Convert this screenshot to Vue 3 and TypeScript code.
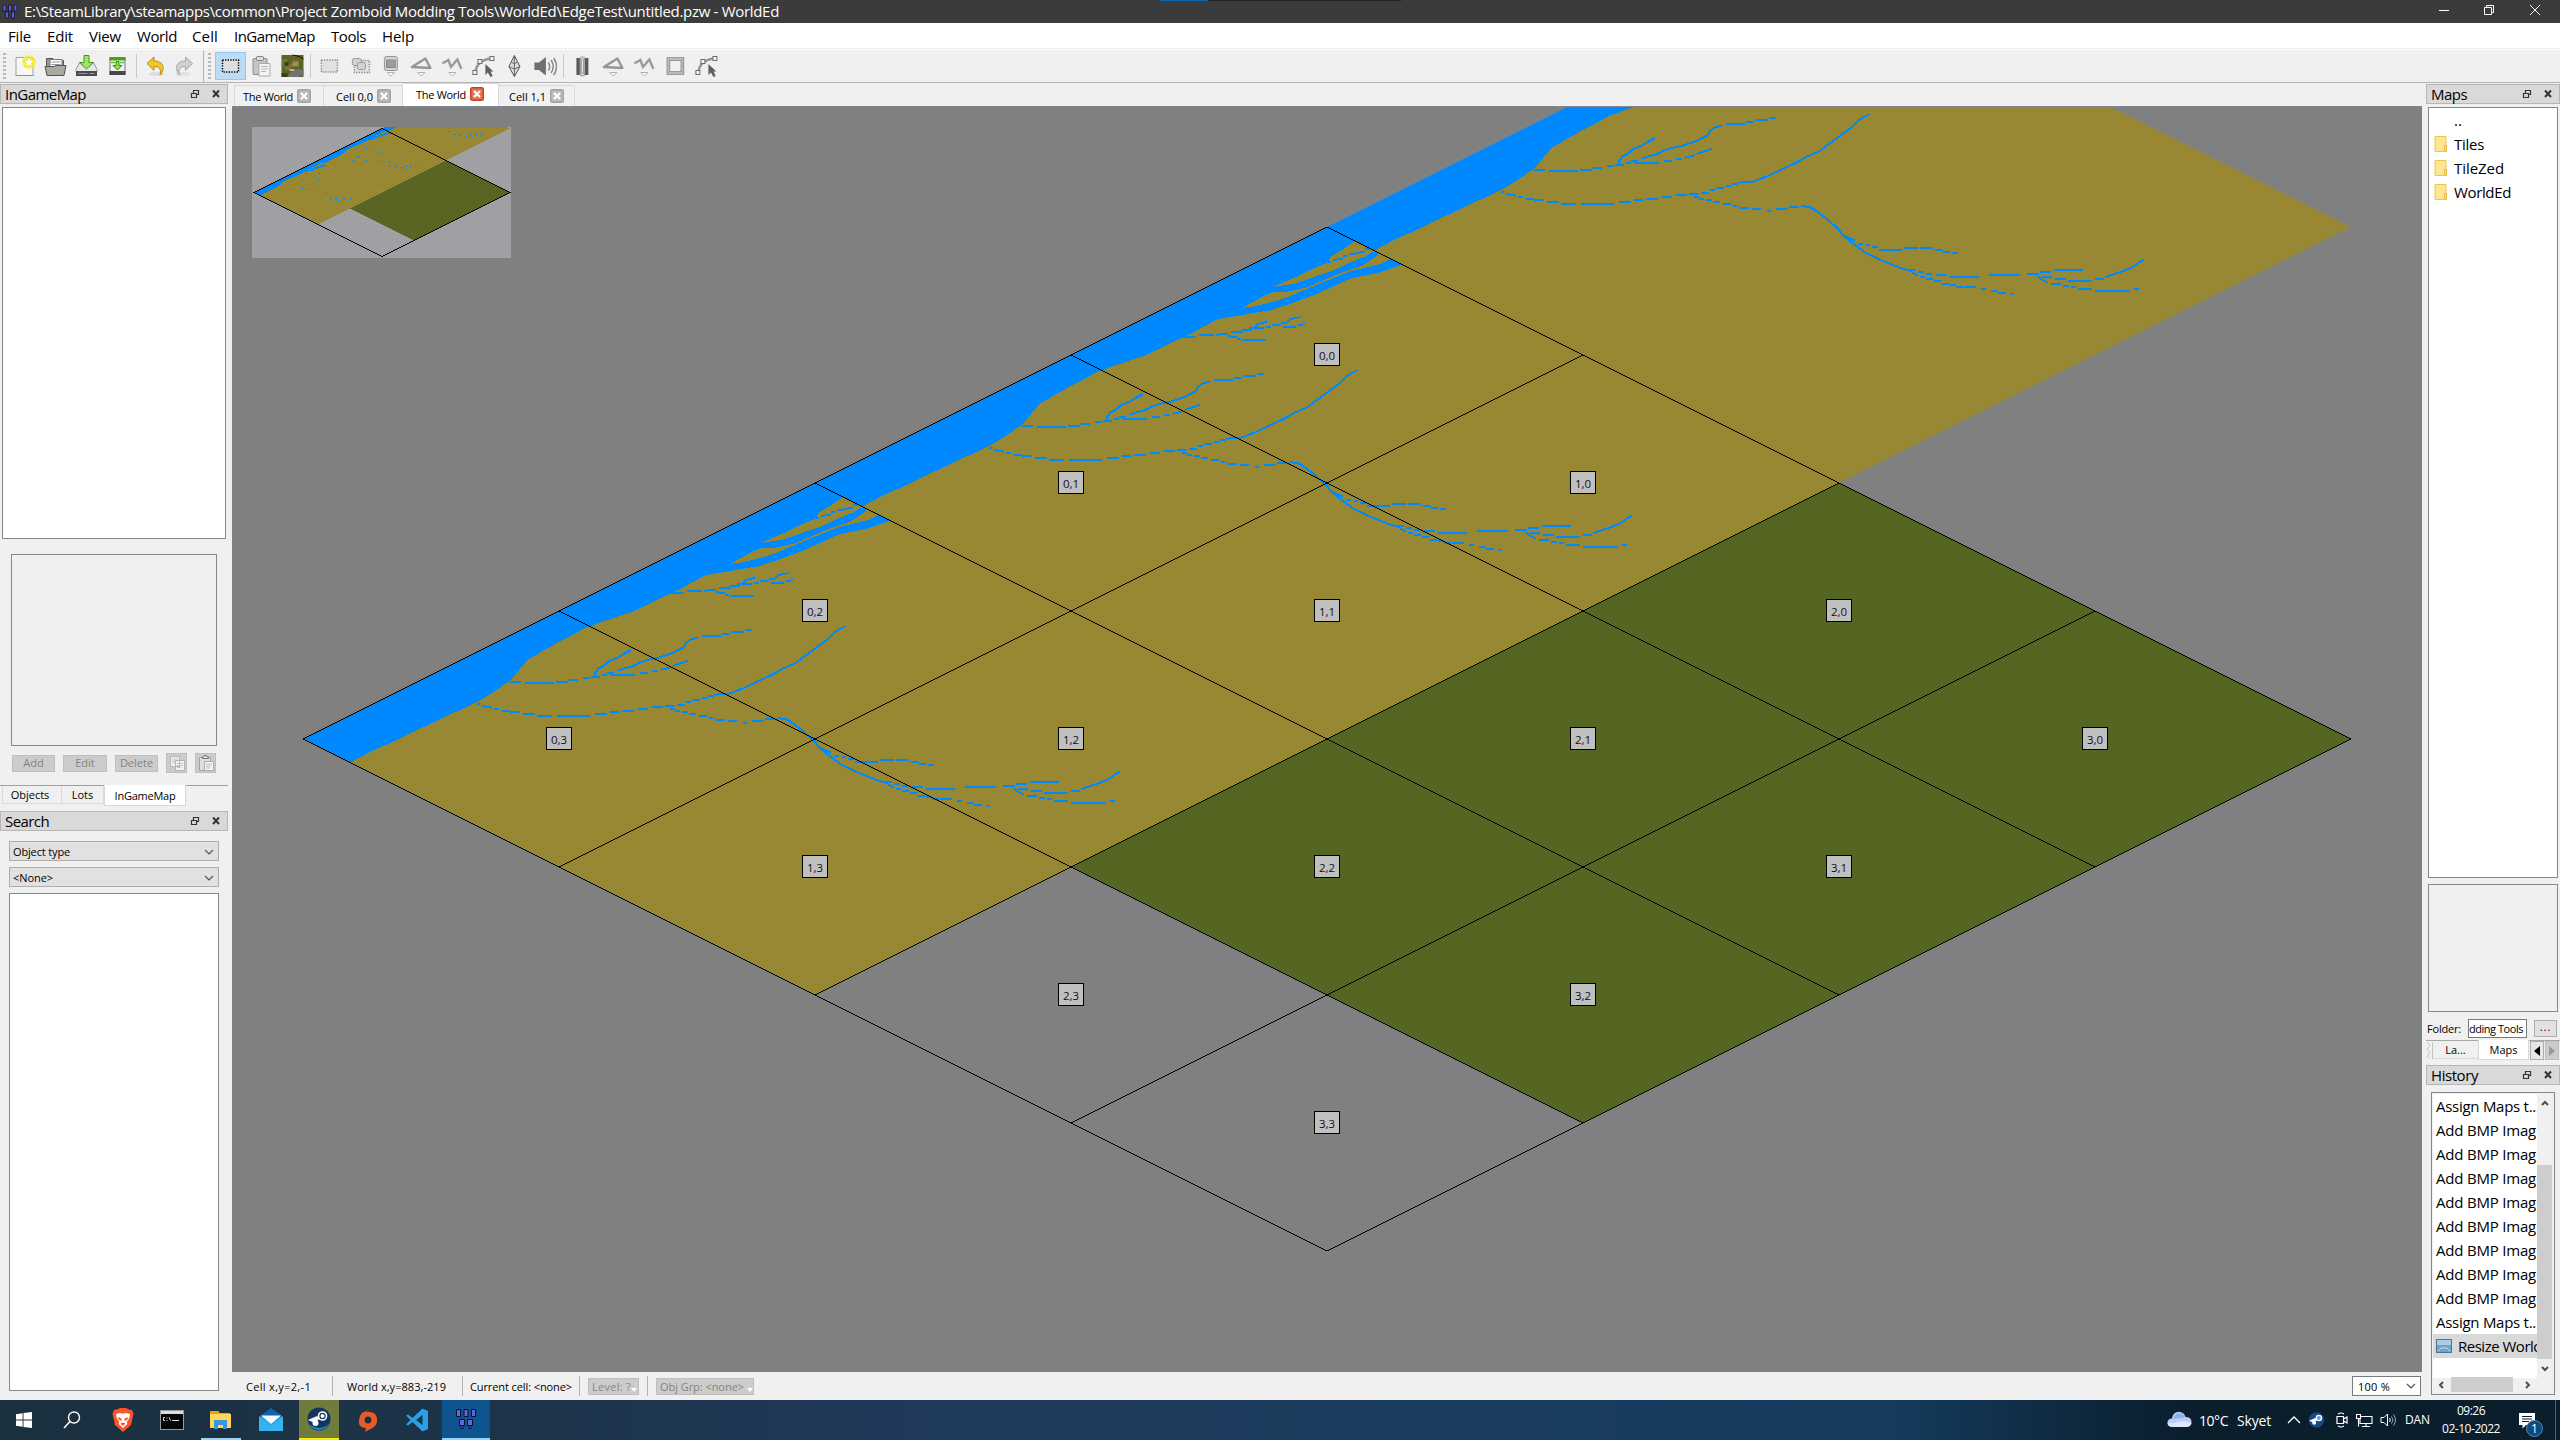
<script setup lang="ts">
import { computed } from 'vue'

/* Spreads a run of text over a known pixel width. */
const vFit = {
  mounted(el: HTMLElement, binding: { value: number }) {
    el.style.display = 'inline-block'
    el.style.whiteSpace = 'pre'
    const natural = el.getBoundingClientRect().width
    const n = (el.textContent || '').length
    if (n > 0) el.style.letterSpacing = (binding.value - natural) / n + 'px'
  },
}

const menus: [string, number, number][] = [
  ['File', 8, 23], ['Edit', 47, 26], ['View', 89, 32], ['World', 137, 40],
  ['Cell', 192, 26], ['InGameMap', 234, 81], ['Tools', 331, 35], ['Help', 382, 32],
]
const menuItems = computed(() =>
  menus.map(([text, x, w], i) => ({
    text, w, gap: i ? x - menus[i - 1][1] - menus[i - 1][2] : x,
  })),
)

const triangle = '<path d="M2.500 13L16 4.500L21 14Z" fill="none" stroke="#959595" stroke-width="2.400" stroke-linejoin="round"/><path d="M8.500 18.500h7l-3.500 3.500z" fill="#fff" stroke="#b0b0b0"/>'
const zigzag = '<path d="M2 9.500L8 6L10.500 13L17 5.500L21 15" fill="none" stroke="#999" stroke-width="2.300"/><path d="M8.500 18.500h7l-3.500 3.500z" fill="#fff" stroke="#b0b0b0"/>'
const nodes = '<path d="M4 17.500Q6 6 20 4.500" fill="none" stroke="#959595" stroke-width="2.400"/><g fill="#f4f4f4" stroke="#6c6c6c"><rect x="1.500" y="16.500" width="4" height="4"/><rect x="6.500" y="5.500" width="4" height="4"/><rect x="18.500" y="2.500" width="4" height="4"/></g><path d="M14 10V21L16.500 18.500L19 23L21.300 22L19.200 17.500H22Z" fill="#606060"/>'

const icons: Record<string, string> = {
  create: '<path d="M3.500 3.500h17v18h-17z" fill="#f7f7f7" stroke="#a2a29e" stroke-linejoin="round"/><path d="M3 21.500h18" stroke="#8f8f8b"/><circle cx="16.500" cy="8" r="7" fill="#f6ee3c" opacity=".75"/><path d="M16.500 2.500l1.700 3.500 3.800.5-2.800 2.600.7 3.800-3.400-1.900-3.400 1.900.7-3.800L11 6.500l3.800-.5z" fill="#fff" stroke="#ede400"/>',
  open: '<path d="M3 20V4.500h6.500l1.500 2h9V20z" fill="#9a9a92" stroke="#56564f"/><path d="M6.500 5.500h12v9h-12z" fill="#fff" stroke="#777"/><path d="M8 8h9M8 10.500h9" stroke="#999"/><path d="M1.500 12.500h9l2-1h10l-2 10h-17z" fill="#a9a9a0" stroke="#56564f"/>',
  save: '<path d="M1.500 15.500L5 8.500h14l3.500 7v2h-21z" fill="#e6e6e6" stroke="#999"/><path d="M1.500 17h21v5h-21z" fill="#4a4a50"/><path d="M4 19.500h9M15 19.500h5" stroke="#999"/><path d="M9.500 1.500h5v7h4.500L12 15 5 8.500h4.500z" fill="#9be860" stroke="#44960f"/>',
  saveAll: '<path d="M4.500 3.500h15v17h-15z" fill="#f2f2f2" stroke="#7b7b7b"/><path d="M4 3h16v3.500H4z" fill="#4ba01c"/><path d="M4 17h16v4H4z" fill="#46464a"/><path d="M5.500 8.500h4M14.500 8.500h4" stroke="#73b34e" stroke-width="1.500"/><path d="M10.500 7.500h3v4h3L12 16 7.500 11.500h3z" fill="#8be04b" stroke="#3d8c0c"/>',
  undo: '<ellipse cx="13" cy="20" rx="8" ry="2" fill="#ddd"/><path d="M3.500 9.500L10.500 3v4c9 0 12 7 6 14 1.500-6-.5-8.500-6-8.500v3.800z" fill="#f0c62a" stroke="#b58c0b"/>',
  redo: '<g transform="translate(-2.500 0)"><ellipse cx="11" cy="20" rx="8" ry="2" fill="#e2e2e2"/><path d="M20.500 9.500L13.500 3v4c-9 0-12 7-6 14-1.500-6 .5-8.500 6-8.500v3.800z" fill="#cfcfcf" stroke="#a6a6a6"/></g>',
  select: '<rect x="4" y="5.500" width="16" height="12.500" fill="#dedfdc"/><rect x="4" y="6" width="16" height="12" fill="none" stroke="#000" stroke-width="1.500" stroke-dasharray="1.300 1.300"/>',
  paste: '<rect x="3.500" y="4.500" width="14" height="16" rx="1" fill="#c4c4c4" stroke="#8f8f8f"/><rect x="7" y="2.500" width="7" height="4" rx="1" fill="#dedede" stroke="#808080"/><path d="M9.500 9.500h11v12.500h-11z" fill="#f5f5f5" stroke="#aaa"/><path d="M11.500 12.500h7M11.500 15h7M11.500 17.500h5" stroke="#b5b5b5"/>',
  terrain: '<rect x="1" y="1" width="22" height="22" fill="#5a6423"/><path d="M2 5h5v5h5V6h6v7h-7v3H4v-4H1z" fill="#7d7036"/><path d="M12 8h6v4h-6z" fill="#a08e58"/><path d="M7 23l3-5 7-3 6 1v5l-6 2z" fill="#707370"/><path d="M12 1q8 1 11 4" stroke="#111" fill="none"/><path d="M1 19h6v4H1zM4 8h4v4H4z" fill="#3a3f1a"/><path d="M9 15h5v2H9z" fill="#c3af7a"/>',
  area: '<rect x="4" y="6" width="16" height="12" fill="#e2e2e2" stroke="#888" stroke-width="1.500" stroke-dasharray="1.300 1.300"/>',
  areas: '<rect x="6" y="6.500" width="15" height="12" fill="#e2e2e2" stroke="#888" stroke-width="1.500" stroke-dasharray="1.300 1.300"/><rect x="4" y="4.500" width="9" height="7" rx="2" fill="#d2d2d2" stroke="#999"/><rect x="9" y="8.500" width="8" height="7" rx="2" fill="#d2d2d2" stroke="#999"/>',
  object: '<rect x="5" y="2.500" width="13" height="14" rx="2" fill="#d4d4d4" stroke="#959595"/><rect x="7" y="6" width="9" height="7.500" fill="#9c9c9c" stroke="#8a8a8a"/><path d="M8 18.500h7l-3.500 3.500z" fill="#fff" stroke="#b0b0b0"/>',
  triangle, zigzag, nodes,
  spawn: '<path d="M12 1.500L6.500 12.500 12 22.500 17.500 12.500z" fill="#ddd" stroke="#555"/><path d="M12 1.500V22.500M6.500 12.500L12 15 17.500 12.500M9 8l3 2 3-2" fill="none" stroke="#666"/>',
  sound: '<path d="M1 8.500h4.500L12.500 3v18.500L5.500 16H1z" fill="#707070"/><path d="M15 8.500q2.500 4 0 8M17.700 6q4.300 6.500 0 13M20.300 4q5.700 8.500 0 17" fill="none" stroke="#8a8a8a" stroke-width="1.500"/>',
  road: '<path d="M6 4h3.500v17H6zM14.500 4H18v17h-3.500z" fill="#5a5a5a"/><path d="M9.500 4h5v17h-5z" fill="#a0a0a0"/><path d="M12 6v13" stroke="#f0f0f0"/><path d="M10 3h4v3h-4zM10 19h4v3h-4z" fill="#ccc" stroke="#999" stroke-width=".7"/>',
  frame: '<rect x="5" y="5" width="14" height="14" fill="none" stroke="#888" stroke-width="3.600"/><rect x="5" y="5" width="14" height="14" fill="none" stroke="#bababa" stroke-width="2"/>',
}
const fileTools = ['create', 'open', 'save', 'saveAll']
const viewTools = ['select', 'paste', 'terrain']
const cellTools = ['area', 'areas', 'object', 'triangle', 'zigzag', 'nodes', 'spawn', 'sound']
const roadTools = ['road', 'triangle', 'zigzag', 'frame', 'nodes']

const tabs = [
  { text: 'The World', w: 90, active: false, fit: 50 },
  { text: 'Cell 0,0', w: 79, active: false, fit: 37 },
  { text: 'The World', w: 96, active: true, fit: 50 },
  { text: 'Cell 1,1', w: 76, active: false, fit: 37 },
]

/* World geometry: isometric cells, 512 x 256 each, 4 x 4 of them. */
const HALF_W = 256
const HALF_H = 128
const TOP = { x: 1327, y: 227 }
const iso = (cx: number, cy: number) => ({
  x: TOP.x + (cx - cy) * HALF_W,
  y: TOP.y + (cx + cy) * HALF_H,
})
const gridPath = computed(() => {
  let d = ''
  for (let i = 0; i <= 4; i++) {
    const a = iso(i, 0), b = iso(i, 4), c = iso(0, i), e = iso(4, i)
    d += `M${a.x} ${a.y}L${b.x} ${b.y}M${c.x} ${c.y}L${e.x} ${e.y}`
  }
  return d
})
const cells = computed(() => {
  const out: { text: string; x: number; y: number }[] = []
  for (let cx = 0; cx < 4; cx++)
    for (let cy = 0; cy < 4; cy++) {
      const p = iso(cx, cy)
      out.push({ text: `${cx},${cy}`, x: p.x, y: p.y + HALF_H })
    }
  return out
})
const tiles = [[303, 739], [815, 483], [1327, 227]]

const river =
  'M0 0L47.5 23.7L68 12.4L96 0L134 -18.6L172.5 -36L189 -46L208 -59L216 -69L224.6 -79L241 -89L260 -99L282 -111L304 -119L329 -127L348 -136L375 -149L403 -164L425 -167.6L455 -172.6L474 -178.6L501.6 -189L537 -205L562 -210L587 -218L575 -224L567 -219.3L534.5 -211.6L523.5 -207L512.5 -202.6L474 -186.6L457.7 -181L435.7 -176L427.5 -175.3L455 -190.3L474 -191.6L493 -196L523.5 -209.3L548 -217.6L562 -227L563.5 -231L556.4 -231L551 -226.6L540 -222.6L518 -212.6L499 -206L479.6 -199.3L457.7 -196L482.4 -206.6L501.6 -216L512.5 -220L515.3 -226L526.3 -232.6L540 -242L512 -256Z'

const streams = [
  'M140 618H163M172 622H237M242 618H268M270 612H292M302 607H318M320 602H340M345 598H357M363 597H420M431 591H449M456 586H470M476 582L500 573M503 570L538 554',
  'M330 600V590L338 577L348 570L360 556L380 545L395 533L410 523',
  'M357 592L372 589M380 584L395 577L415 571L430 559L450 551L470 546L490 537L505 530L528 514L532 502L545 490L560 485M569 480H612M613 474H632M635 468H664M666 463H681',
  'M65 683L72 685M77 690L98 695M102 699H114M120 704H138M138 709H160M168 714H194M199 720H232M244 720H317M329 714H357M363 709H383M390 704H416M426 698H447M456 694H482M486 690H507M512 686H530M533 679H545M547 673H565M568 667H580M581 661H595M597 656L630 653L660 638L700 612L725 597L750 578L778 562L800 540L830 510L850 490L870 465L891 450',
  'M497 698H508M508 704H520M525 709H538M540 714H556M562 719H580M584 726H593M599 731H620M627 735H648M661 740H670M681 735H707M711 730H733M736 725H745M746 730H757L765 735L780 750L795 765L810 783L820 795L830 812L850 835L880 865L915 888L960 912L985 921M975 919H995M1000 923H1012M1017 930H1030M1040 934H1065M1071 939H1135M1158 934H1227M1244 930H1270M1272 924H1296M1303 919H1369',
  'M1265 934L1275 945L1290 955M1298 960H1320M1323 966H1337M1342 970H1352M1357 975H1390M1396 981H1475M1480 975H1494',
  'M1277 939H1300M1307 945H1330M1335 950H1390M1395 945H1416M1418 940L1435 932L1455 923L1480 910L1495 895L1505 887',
  'M985 925L1000 935M1003 938H1015M1017 945H1033M1035 950H1050M1052 961H1068M1070 964H1085M1085 968H1100M1103 970H1128M1140 975H1152M1163 981H1175M1179 987H1196M1205 991H1213',
  'M832 815L858 830M865 840H875M882 843H892M895 850H910M911 857H963M968 852H1000M1004 852H1033M1037 857H1056M1056 863H1070M1075 868H1089',
  'M502 351H529M535 346H568M573 346H580M580 342H600M600 347H607M607 351H620M620 357H630M632 361H685M607 336H633M632 330H655M648 325H680M660 322L668 312L680 308L688 304M685 320H697M699 315H720M720 309H733M733 303H740M737 298H747M745 294H757M760 290H764M724 320H753M757 315H768M768 310H773',
  'M820 126H830M835 119H845M845 116H857M857 109H870M872 103H885M885 98H897M895 95H908M908 88H918',
].join('')

/* Single-pixel water specks of the overview, as x,y pairs inside it. */
const specks = [
  [352, 160], [357, 157], [365, 148], [372, 147], [380, 152], [358, 156], [365, 160], [378, 161], [388, 162], [389, 165],
  [395, 166], [400, 167], [405, 166], [410, 166], [415, 165], [402, 169], [448, 131], [454, 134], [459, 135], [465, 136],
  [470, 134], [475, 134], [480, 134], [468, 137], [293, 189], [302, 188], [308, 189], [301, 179], [317, 180], [316, 187],
  [325, 193], [330, 198], [335, 198], [338, 200], [345, 199], [350, 198], [343, 198], [312, 170], [318, 173], [306, 173],
]

const folders = ['Tiles', 'TileZed', 'WorldEd']
const folderFits = [30, 50, 57]
const history = [
  'Assign Maps t..', ...Array.from({ length: 8 }, () => 'Add BMP Imag'), 'Assign Maps t..',
]
</script>

<template>
  <div class="screen">
    <header class="title">
      <svg class="logo" width="16" height="16" viewBox="0 0 16 16"><g fill="#5a5ae0" stroke="#15152a" stroke-width=".8"><path d="M1 1h3v6H1zM6.500 1h3v6h-3zM12 1h3v6h-3zM3.500 8h3v6h-3zM9.500 8h3v6h-3z" /></g></svg>
      <span v-fit="755" class="ttext">E:\SteamLibrary\steamapps\common\Project Zomboid Modding Tools\WorldEd\EdgeTest\untitled.pzw - WorldEd</span>
      <svg class="winctl" width="140" height="23" viewBox="0 0 140 23"><path d="M19 10.500h10M64.500 7.500h7v7h-7zM66.500 7V5.500h7v7H72M110 5l10 10M120 5l-10 10" fill="none" stroke="#fff" /></svg>
      <div class="topbar"><i></i></div>
    </header>
    <nav class="menu">
      <span v-for="m in menuItems" :key="m.text" class="mi" :style="{ marginLeft: m.gap + 'px', width: m.w + 'px' }"><span v-fit="m.w">{{ m.text }}</span></span>
    </nav>
    <div class="toolbar">
      <i class="grip"></i>
      <svg v-for="t in fileTools" :key="t" class="tool" viewBox="0 0 24 24" v-html="icons[t]"></svg>
      <i class="sep"></i>
      <svg class="tool" viewBox="0 0 24 24" v-html="icons.undo"></svg>
      <svg class="tool" viewBox="0 0 24 24" v-html="icons.redo"></svg>
      <i class="tbend"></i>
      <i class="grip second"></i>
      <svg v-for="(t, i) in viewTools" :key="t" class="tool" :class="{ on: i === 0 }" viewBox="0 0 24 24" v-html="icons[t]"></svg>
      <i class="sep left"></i>
      <svg v-for="t in cellTools" :key="t" class="tool narrow" viewBox="0 0 24 24" v-html="icons[t]"></svg>
      <i class="sep"></i>
      <svg v-for="t in roadTools" :key="t" class="tool narrow" viewBox="0 0 24 24" v-html="icons[t]"></svg>
    </div>

    <main class="body">
      <aside class="leftcol">
        <div class="dock"><span v-fit="81">InGameMap</span><svg class="dctl" width="30" height="12" viewBox="0 0 30 12"><path d="M1.500 5.500h5v4h-5zM1 5.500h6M3.500 5V2.500h5v4H7M3 2.500h6" /><path class="x" d="M23 2.500l6 6.500M29 2.500l-6 6.500" /></svg></div>
        <div class="tree"></div>
        <div class="preview"></div>
        <div class="btnrow">
          <span class="btn b1">Add</span><span class="btn b2">Edit</span><span class="btn b3">Delete</span>
          <span class="btn sq"><svg width="16" height="16" viewBox="0 0 16 16"><path d="M1.500 1.500h9v10h-9zM6.500 5.500h9v10h-9z" fill="#f3f3f3" stroke="#b4b4b4" /><path d="M3 4h6M3 6h3M3 8h3M8 8.500h6M8 10.500h6M8 12.500h4" stroke="#c4c4c4" /></svg></span>
          <span class="btn sq s2"><svg width="16" height="16" viewBox="0 0 16 16"><path d="M1.500 2.500h11v13h-11z" fill="#ddd" stroke="#a4a4a4" /><path d="M4.500 3.500V2h1.500l.5-1.500h2L9 2h1.500v1.500z" fill="#eee" stroke="#777" /><path d="M6.500 6.500h9v9h-9z" fill="#f6f6f6" stroke="#aaa" /><path d="M8 9h6M8 11h5M8 13h4" stroke="#bbb" /></svg></span>
        </div>
        <div class="ltabs"><span class="lt t1">Objects</span><span class="lt t2">Lots</span><span class="lt t3">InGameMap</span></div>
        <div class="dock search"><span v-fit="44">Search</span><svg class="dctl" width="30" height="12" viewBox="0 0 30 12"><path d="M1.500 5.500h5v4h-5zM1 5.500h6M3.500 5V2.500h5v4H7M3 2.500h6" /><path class="x" d="M23 2.500l6 6.500M29 2.500l-6 6.500" /></svg></div>
        <div class="combo"><span v-fit="57">Object type</span><svg width="10" height="6" viewBox="0 0 10 6"><path d="M1 1l4 4 4-4" fill="none" stroke="#555" stroke-width="1.200" /></svg></div>
        <div class="combo c2"><span v-fit="40">&lt;None&gt;</span><svg width="10" height="6" viewBox="0 0 10 6"><path d="M1 1l4 4 4-4" fill="none" stroke="#555" stroke-width="1.200" /></svg></div>
        <div class="results"></div>
      </aside>

      <section class="center">
        <div class="tabbar">
          <div v-for="(t, i) in tabs" :key="i" class="tab" :class="{ active: t.active }" :style="{ width: t.w + 'px' }">
            <span v-fit="t.fit">{{ t.text }}</span>
            <svg width="14" height="14" viewBox="0 0 14 14"><rect x=".7" y=".7" width="12.600" height="12.600" rx="1.500" :fill="t.active ? '#e0754f' : '#bcbcbc'" :stroke="t.active ? '#d23c1e' : '#a2a2a2'" stroke-width="1.400" /><path d="M4 4l6 6M10 4l-6 6" stroke="#fff" stroke-width="2.200" /></svg>
          </div>
        </div>
        <div class="canvas">
          <svg class="world" width="2190" height="1265" viewBox="232 107 2190 1265">
            <defs>
              <clipPath id="diamond"><path d="M0 0L512 -256L1024 0L512 256Z" /></clipPath>
              <g id="tile" clip-path="url(#diamond)">
                <path d="M0 0L512 -256L1024 0L512 256Z" class="sand" />
                <path :d="river" class="water" />
              </g>
              <g id="streams" transform="translate(145 -263) scale(.4464 .33333)"><path :d="streams" class="stream" /></g>
            </defs>
            <g shape-rendering="crispEdges">
              <g v-for="t in tiles" :key="t[0]" :transform="`translate(${t[0]} ${t[1]})`"><use href="#tile" /><use href="#streams" /></g>
              <path d="M1839 483L2351 739L1583 1123L1071 867Z" class="grass" />
              <path :d="gridPath" class="grid" />
            </g>
            <g v-for="c in cells" :key="c.text">
              <rect :x="c.x - 12.5" :y="c.y - 11.5" width="25" height="22" class="lbox" />
              <text :x="c.x" :y="c.y + 5" class="ltext" textLength="16">{{ c.text }}</text>
            </g>
            <svg x="252" y="127" width="259" height="131" viewBox="252 127 259 131" shape-rendering="crispEdges">
              <rect x="252" y="127" width="259" height="131" fill="#a0a0a4" />
              <g transform="translate(216.125 100.125) scale(.125)" class="mini">
                <use v-for="t in tiles" :key="t[0]" href="#tile" :x="t[0]" :y="t[1]" />
                <path d="M1839 483L2351 739L1583 1123L1071 867Z" class="grass" />
              </g>
              <rect v-for="(s, i) in specks" :key="i" :x="s[0]" :y="s[1]" width="1.500" height="1" fill="#008aff" />
              <path d="M254 192.500L382 128.500L510 192.500L382 256.500Z" fill="none" stroke="#000" />
            </svg>
          </svg>
        </div>
        <div class="status">
          <span class="st s1"><span v-fit="65">Cell x,y=2,-1</span></span><i class="vs"></i>
          <span class="st s2x"><span v-fit="99">World x,y=883,-219</span></span><i class="vs"></i>
          <span class="st s3"><span v-fit="102">Current cell: &lt;none&gt;</span></span><i class="vs"></i>
          <span class="sbtn k1"><span v-fit="39">Level: ?</span><b></b></span><i class="vs"></i>
          <span class="sbtn k2"><span v-fit="84">Obj Grp: &lt;none&gt;</span><b></b></span>
          <span class="zoom"><span v-fit="32">100 %</span><svg width="10" height="6" viewBox="0 0 10 6"><path d="M1 1l4 4 4-4" fill="none" stroke="#555" stroke-width="1.200" /></svg></span>
        </div>
      </section>

      <aside class="rightcol">
        <div class="dock"><span v-fit="36">Maps</span><svg class="dctl" width="30" height="12" viewBox="0 0 30 12"><path d="M1.500 5.500h5v4h-5zM1 5.500h6M3.500 5V2.500h5v4H7M3 2.500h6" /><path class="x" d="M23 2.500l6 6.500M29 2.500l-6 6.500" /></svg></div>
        <div class="files">
          <div class="frow"><i class="nofolder"></i><span>..</span></div>
          <div v-for="(f, i) in folders" :key="f" class="frow">
            <svg width="14" height="18" viewBox="0 0 14 18"><path d="M1 1.500h11v15H1z" fill="#ffe694" stroke="#edc84f" /><path d="M10.500 10.500h2v6h-2z" fill="#ffe694" stroke="#e6b93a" /></svg>
            <span v-fit="folderFits[i]">{{ f }}</span>
          </div>
        </div>
        <div class="rpreview"></div>
        <div class="folder"><span v-fit="34" class="flabel">Folder:</span><span class="finput"><span v-fit="54">dding Tools</span></span><span class="fbtn">...</span></div>
        <div class="rtabs">
          <svg width="7" height="19" viewBox="0 0 7 19"><path d="M1 1l3 3-3 4 3 4-3 3 3 3M6.500 1v17" fill="none" stroke="#c4c4c4" /></svg>
          <span class="rt la">La...</span><span class="rt mp">Maps</span>
          <span class="arr a1"><svg width="6" height="10" viewBox="0 0 6 10"><path d="M6 0v10L0 5z" fill="#000" /></svg></span>
          <span class="arr a2"><svg width="6" height="10" viewBox="0 0 6 10"><path d="M0 0v10l6-5z" fill="#999" /></svg></span>
        </div>
        <div class="dock hist"><span v-fit="47">History</span><svg class="dctl" width="30" height="12" viewBox="0 0 30 12"><path d="M1.500 5.500h5v4h-5zM1 5.500h6M3.500 5V2.500h5v4H7M3 2.500h6" /><path class="x" d="M23 2.500l6 6.500M29 2.500l-6 6.500" /></svg></div>
        <div class="hlist">
          <div class="hmain">
            <div class="hitems">
              <div v-for="(h, i) in history" :key="i" class="hrow"><span v-fit="100">{{ h }}</span></div>
              <div class="hrow cur"><svg width="16" height="14" viewBox="0 0 16 14"><rect x=".5" y=".5" width="15" height="13" fill="#6fa3c7" stroke="#46769a" /><path d="M1 1h14v5H1z" fill="#a9cde4" /><path d="M2 12l3-3h6l3 3" fill="none" stroke="#cfe3f0" /></svg><span v-fit="84">Resize World</span></div>
            </div>
            <div class="vbar">
              <svg width="8" height="6" viewBox="0 0 8 6"><path d="M1 5l3-3 3 3" /></svg><i></i>
              <svg width="8" height="6" viewBox="0 0 8 6"><path d="M1 1l3 3 3-3" /></svg>
            </div>
          </div>
          <div class="hbar">
            <svg width="6" height="8" viewBox="0 0 6 8"><path d="M5 1L2 4l3 3" /></svg><i></i>
            <svg width="6" height="8" viewBox="0 0 6 8"><path d="M1 1l3 3-3 3" /></svg>
          </div>
        </div>
      </aside>
    </main>

    <footer class="task">
      <span class="tk w48"><svg width="16" height="16" viewBox="0 0 16 16"><path d="M0 2.200L6.600 1.300V7.600H0zM7.500 1.100L16 0V7.600H7.500zM0 8.400H6.600V14.700L0 13.800zM7.500 8.400H16V16L7.500 14.900z" fill="#fff" /></svg></span>
      <span class="tk w48"><svg width="18" height="18" viewBox="0 0 18 18"><circle cx="11" cy="6.500" r="5.500" fill="none" stroke="#fff" stroke-width="1.400" /><path d="M7 10.500L1 17" stroke="#fff" stroke-width="1.600" /></svg></span>
      <span class="tk w53"><svg width="22" height="24" viewBox="0 0 22 24"><path d="M5 1.500L8 0h6l3 1.500 3 .5 1.500 4-.5 2L19 17l-8 7-8-7L1 8l-.5-2L2 2z" fill="#fb542b" /><path d="M4 6l4-1 3 .7L14 5l4 1-.7 4-2.500 4 .5 2L11 20l-4.300-4 .5-2-2.500-4z" fill="#fff" /><path d="M5.500 9l4 1.500V13L7 12zM16.500 9l-4 1.500V13l2.500-1zM8.500 15.500L11 14.500l2.500 1L11 18z" fill="#fb542b" /></svg></span>
      <span class="tk w45"><svg width="24" height="20" viewBox="0 0 24 20"><rect x=".5" y=".5" width="23" height="19" fill="#050505" stroke="#999" /><path d="M1 1h22v3H1z" fill="#ddd" /><path d="M5 7.500H3.500v3H5M7 7.500v1M7 10v1M9 7.500l1.500 3M12 10.500h7" stroke="#ddd" fill="none" /></svg></span>
      <span class="tk w53 run"><svg width="23" height="20" viewBox="0 0 23 20"><path d="M1 1h8l2 2h10v3H1z" fill="#e5a50e" /><path d="M1 4h21v14H1z" fill="#ffd65c" /><path d="M5 19v-9h13v9h-4v-4H9v4z" fill="#3d94dc" /></svg></span>
      <span class="tk w48"><svg width="26" height="24" viewBox="0 0 26 24"><path d="M1 8.500L13 0l12 8.500z" fill="#0f63b0" /><path d="M1 8.500h24V23H1z" fill="#1f9be6" /><path d="M3 7.500h20L13 16z" fill="#f4fbff" /><path d="M1 8.500L13 17 25 8.500V23H1z" fill="#35b2f2" /></svg></span>
      <span class="tk steam"><svg width="24" height="24" viewBox="0 0 24 24"><circle cx="12" cy="12" r="11.500" fill="#14355f" /><path d="M2 17q10 8 20 0a11.500 11.500 0 0 1-20 0z" fill="#1f8fc6" /><path d="M.8 13l7 3 5-4.500L10 9z" fill="#fff" opacity=".95" /><circle cx="15.500" cy="9" r="4" fill="none" stroke="#fff" stroke-width="1.600" /><circle cx="15.500" cy="9" r="2" fill="#fff" /><circle cx="8.500" cy="16" r="3" fill="#fff" /></svg></span>
      <span class="tk w58"><svg width="20" height="24" viewBox="0 0 20 24"><path d="M13 0Q9 1.500 8.500 4 17 2.500 19 10q1 8-6.500 11-3 1.500-5.500 3 1-3 1-3.800Q0 20 1 12 2 4 8 3.300 10 .5 13 0z" fill="#e55b27" /><circle cx="10" cy="12" r="3.400" fill="#1c3040" /></svg></span>
      <span class="tk vs2"><svg width="24" height="24" viewBox="0 0 24 24"><path d="M17.500.5L23 3v18l-5.500 2.500L7.500 14 3 17.500l-2-1L5.500 12 1 7.500l2-1L7.500 10zM17.500 7L11 12l6.500 5z" fill="#2b9fe8" fill-rule="evenodd" /></svg></span>
      <span class="tk we"><svg width="22" height="22" viewBox="0 0 22 22"><g fill="#6464dc" stroke="#0c1234"><path d="M1.500 1.500h4v7h-4zM9 1.500h4v7H9zM16.500 1.500h4v7h-4zM4.500 11.500h5v6h-5zM12.500 11.500h5v6h-5z" /><path d="M6 17.500h2v3H6zM14 17.500h2v3h-2z" /></g></svg></span>
      <span class="tray">
        <svg class="cloud" width="25" height="17" viewBox="0 0 25 17"><path d="M5 16q-5-.5-4.500-5Q1 7.500 5 7.500 6 1 12 .8 17 1 18.500 6q6 0 6 5 0 4.500-5 5z" fill="#b9cdf8" /><path d="M6 8q2-6 7-6 4 1 4.500 5-6 0-11.500 1z" fill="#8fb0f0" /><path d="M5 16q-4-.5-4.500-4 5 1 10-1 8-2 14 1-.5 3.500-5 4z" fill="#dde7fd" /></svg>
        <span v-fit="29" class="wt">10°C</span><span v-fit="34" class="wt sk">Skyet</span>
        <svg class="chev" width="14" height="8" viewBox="0 0 14 8"><path d="M1 7l6-6 6 6" fill="none" stroke="#fff" stroke-width="1.300" /></svg>
        <svg class="tsteam" width="17" height="16" viewBox="0 0 24 24"><circle cx="12" cy="12" r="11.500" fill="#14498a" /><path d="M.8 13l7 3 5-4.500L10 9z" fill="#fff" /><circle cx="15.500" cy="9" r="4" fill="#7c98bb" stroke="#fff" stroke-width="2" /><circle cx="8.500" cy="16" r="3" fill="#fff" /></svg>
        <svg class="cam" width="13" height="16" viewBox="0 0 13 16"><path d="M2 4.500h6.500v7H2zM8.500 7L12 5v6L8.500 9M3 2q3-2 6 0M3 14q3 2 6 0" fill="none" stroke="#fff" stroke-width="1.200" /></svg>
        <svg class="net" width="17" height="15" viewBox="0 0 17 15"><path d="M5 3.500h11v7H4V6M10 10.500v3M6 13.500h8M.500 1.500h4v4h-4zM2.500 5.500v8" fill="none" stroke="#fff" stroke-width="1.100" /></svg>
        <svg class="vol" width="17" height="14" viewBox="0 0 17 14"><path d="M1 4.500h3L7.500 1v12L4 9.500H1z" fill="none" stroke="#fff" /><path d="M9.500 5q1.500 2 0 4" fill="none" stroke="#fff" /><path d="M11.500 3.500q3 3.500 0 7M13.500 1.500q4 5.500 0 11" fill="none" stroke="#9aa6b0" /></svg>
        <span v-fit="25" class="dan">DAN</span>
        <span class="clock"><span v-fit="28">09:26</span><span v-fit="58">02-10-2022</span></span>
        <svg class="note" width="26" height="26" viewBox="0 0 26 26"><path d="M1 1h16v12h-9l-3.500 3.500V13H1z" fill="#fff" /><path d="M4 4.500h10M4 7h10M4 9.500h7" stroke="#0b1f2e" /><circle cx="16.500" cy="16.500" r="8" fill="#0c4a80" stroke="#5d87ab" /><text x="16.500" y="21" fill="#fff" font-size="12" font-family="Open Sans, sans-serif" text-anchor="middle">1</text></svg>
        <i class="peek"></i>
      </span>
    </footer>
  </div>
</template>

<style>
body { margin: 0; overflow: hidden; }
</style>

<style scoped>
.screen { width: 2560px; height: 1440px; display: flex; flex-direction: column; background: #f0f0f0; font-family: 'Open Sans', 'Noto Sans', sans-serif; color: #000; overflow: hidden; position: relative; }
.screen *, .screen { box-sizing: border-box; }
svg { display: block; flex: none; }
i { font-style: normal; flex: none; }
.title { height: 23px; flex: none; background: #3b3b3b; display: flex; align-items: center; color: #fff; }
.logo { margin-left: 2px; }
.ttext { font-size: 15px; line-height: 20px; padding-bottom: 2px; margin-left: 6px; }
.winctl { margin-left: auto; margin-right: 0; width: 140px; }
.topbar { position: absolute; left: 1160px; top: 0; width: 241px; height: 1px; background: #222; }
.topbar i { display: block; width: 48px; height: 1px; background: #0a64ad; }
.menu { height: 26px; flex: none; background: #fff; display: flex; align-items: center; font-size: 15px; border-bottom: 1px solid #f0f0f0; }
.mi { white-space: nowrap; flex: none; line-height: 26px; padding-top: 1px; }
.toolbar { height: 34px; flex: none; display: flex; align-items: center; border-bottom: 1px solid #b4b4b4; border-top: 1px solid #fbfbfb; }
.grip { width: 3px; height: 26px; margin: 0 3px; background: repeating-linear-gradient(#b8b8b8 0 2px, transparent 2px 4px); }
.grip.second { margin: 0 4px 0 4px; }
.tool { width: 31px; height: 28px; padding: 2px 3.5px; }
.tool.narrow { width: 30.8px; padding: 2px 3.4px; }
.tool.on { background: #bcdcf4; border: 1px solid #90c8f6; padding: 1px 2.500px; }
.sep { width: 7px; height: 24px; background: linear-gradient(#c8c8c8, #c8c8c8) 3px 0 / 1px 100% no-repeat; }
.sep.left { width: 6px; background-position: 2px 0; }
.tbend { width: 1px; height: 33px; background: #b4b4b4; margin-left: 1px; }
.body { flex: none; height: 1317px; display: flex; }

.leftcol { width: 232px; flex: none; display: flex; flex-direction: column; align-items: flex-start; padding-top: 1px; }
.dock { width: 228px; height: 20px; flex: none; background: #d9d9d9; border: 1px solid #b6b6b6; display: flex; align-items: center; font-size: 15px; line-height: 18px; padding-left: 4px; }
.dctl { margin-left: auto; margin-right: 7px; }
.dctl path { fill: none; stroke: #333; stroke-width: 1.2; }
.dctl path.x { stroke-width: 2; }
.tree { width: 224px; height: 432px; margin: 3px 0 0 2px; background: #fff; border: 1px solid #828790; flex: none; }
.preview { width: 206px; height: 192px; margin: 15px 0 0 11px; border: 1px solid #828790; flex: none; }
.btnrow { display: flex; height: 20px; margin: 7px 0 1px 12px; align-items: center; flex: none; }
.btn { height: 17px; background: #cccccc; border: 1px solid #bfbfbf; color: #838383; font-size: 11px; line-height: 14px; text-align: center; flex: none; }
.b1 { width: 43px; }
.b2 { width: 44px; margin-left: 8px; }
.b3 { width: 43px; margin-left: 8px; }
.sq { width: 21px; height: 20px; margin-left: 8px; display: flex; align-items: center; justify-content: center; }
.ltabs { width: 228px; height: 21px; margin-top: 11px; border-top: 1px solid #a0a0a0; display: flex; align-items: flex-start; padding-left: 2px; flex: none; font-size: 11px; text-align: center; }
.lt { height: 18px; line-height: 18px; border: 1px solid #d9d9d9; border-top: 0; flex: none; }
.t1 { width: 60px; padding-right: 4px; }
.t2 { width: 42px; border-left: 0; }
.t3 { width: 82px; height: 21px; line-height: 21px; background: #fff; margin-top: -1px; letter-spacing: -0.25px; }
.search { margin-top: 5px; }
.combo { width: 210px; height: 20px; margin: 10px 0 0 9px; background: #e1e1e1; border: 1px solid #adadad; font-size: 11px; display: flex; align-items: center; padding: 1px 4px 0 3px; justify-content: space-between; flex: none; }
.combo.c2 { margin-top: 6px; }
.results { width: 210px; height: 498px; margin: 6px 0 0 9px; background: #fff; border: 1px solid #828790; flex: none; }

.center { width: 2190px; flex: none; display: flex; flex-direction: column; }
.tabbar { height: 24px; flex: none; display: flex; align-items: flex-end; padding-left: 2px; border-bottom: 1px solid #828790; font-size: 11px; }
.tab { height: 21px; border: 1px solid #d9d9d9; border-left: 0; border-bottom: 0; display: flex; align-items: center; justify-content: space-between; padding: 0 12px 0 8px; flex: none; }
.tab:first-child { border-left: 1px solid #d9d9d9; }
.tab:nth-child(2) { padding-left: 12px; padding-right: 11px; }
.tab.active { height: 23px; background: #fff; padding: 0 14px 2px 13px; }
.tab:last-child { padding: 0 10px 0 10px; }
.canvas { height: 1265px; flex: none; background: #808080; }
.world { display: block; }
.sand { fill: #998833; }
.water { fill: #0088ff; }
.grass { fill: #556622; }
.mini .grass { fill: #5a6423; }
.stream { fill: none; stroke: #0088ff; stroke-width: 2; vector-effect: non-scaling-stroke; }
.grid { fill: none; stroke: #000; stroke-width: 1; }
.lbox { fill: #c0c0c0; stroke: #000; }
.ltext { font-size: 11.5px; text-anchor: middle; fill: #111; }
.status { height: 28px; flex: none; display: flex; align-items: center; font-size: 11px; }
.st { white-space: nowrap; flex: none; }
.s1 { margin-left: 14px; width: 86px; }
.s2x { margin-left: 14px; width: 115px; }
.s3 { margin-left: 7px; width: 109px; }
.vs { width: 1px; height: 20px; background: #b4b4b4; }
.sbtn { height: 17px; background: #ccc; border: 1px solid #bfbfbf; color: #838383; display: flex; align-items: center; padding-left: 3px; flex: none; }
.sbtn b { width: 0; height: 0; border: 3px solid transparent; border-top: 4px solid #fff; border-bottom: 0; margin-top: 8px; }
.k1 { margin: 0 8px 0 8px; width: 51px; }
.k2 { margin-left: 8px; width: 98px; }
.k2 b { margin-left: 3px; }
.zoom { margin-left: auto; margin-right: 1px; width: 69px; height: 20px; border: 1px solid #7a7a7a; background: #fff; display: flex; align-items: center; justify-content: space-between; padding: 0 4px 0 5px; }

.rightcol { width: 138px; flex: none; padding: 1px 0 0 4px; display: flex; flex-direction: column; align-items: flex-start; }
.rightcol .dock { width: 134px; }
.files { width: 130px; height: 771px; margin: 3px 0 0 2px; border: 1px solid #828790; background: #fff; flex: none; }
.frow { height: 24px; display: flex; align-items: center; padding-left: 5px; font-size: 15px; line-height: 24px; }
.frow svg, .nofolder { width: 14px; margin-right: 6px; }
.rpreview { width: 130px; height: 128px; margin: 6px 0 0 2px; border: 1px solid #828790; flex: none; }
.folder { display: flex; align-items: center; height: 20px; margin-top: 6px; font-size: 11px; flex: none; }
.flabel { margin-left: 1px; flex: none; }
.finput { width: 59px; height: 19px; border: 1px solid #7a7a7a; background: #fff; line-height: 18px; margin-left: 7px; overflow: hidden; }
.fbtn { width: 23px; height: 17px; border: 1px solid #adadad; background: #e1e1e1; margin-left: 7px; line-height: 12px; text-align: center; letter-spacing: 1px; }
.rtabs { display: flex; width: 134px; height: 20px; margin-top: 2px; border-top: 1px solid #a8a8a8; font-size: 11px; flex: none; text-align: center; }
.rt { flex: none; }
.la { width: 45px; height: 18px; line-height: 18px; border-bottom: 1px solid #d9d9d9; }
.mp { width: 51px; height: 20px; line-height: 20px; background: #fff; border: 1px solid #d9d9d9; border-top: 0; margin-top: -1px; }
.arr { width: 14px; height: 19px; border: 1px solid #adadad; background: #e6e6e6; display: flex; align-items: center; justify-content: center; flex: none; }
.a1 { margin-left: 1px; }
.a2 { background: #ccc; border-color: #bfbfbf; margin-left: 1px; }
.hist { margin-top: 5px; }
.hlist { width: 124px; height: 303px; margin: 7px 0 0 5px; border: 1px solid #828790; flex: none; padding: 1px; }
.hmain { display: flex; height: 284px; }
.hitems { width: 104px; background: #fff; overflow: hidden; flex: none; }
.hrow { height: 24px; font-size: 15px; line-height: 24px; padding-left: 3px; display: flex; align-items: center; white-space: nowrap; }
.cur { background: #d9d9d9; height: 24px; }
.cur svg { margin-right: 6px; }
.vbar { width: 15px; display: flex; flex-direction: column; align-items: center; justify-content: space-between; padding: 6px 0; }
.vbar i { width: 15px; height: 194px; background: #cdcdcd; margin-top: 52px; }
.vbar path, .hbar path { fill: none; stroke: #505050; stroke-width: 2; }
.hbar { display: flex; height: 15px; align-items: center; padding-left: 5px; margin-top: -1px; }
.hbar i { width: 62px; height: 15px; background: #cdcdcd; margin: 0 12px 0 7px; }

.task { height: 40px; flex: none; display: flex; background: linear-gradient(90deg, #1a303f 0, #1d3349 500px, #20395a 900px, #1b3d60 1400px, #143a5c 1900px, #0d2437 2120px, #0a1e2c 2200px); color: #fff; }
.tk { display: flex; align-items: center; justify-content: center; flex: none; height: 40px; }
.w48 { width: 48px; }
.w53 { width: 53px; }
.w45 { width: 45px; }
.w58 { width: 58px; }
.run { background: linear-gradient(#99d1f8, #99d1f8) 7px 100% / 40px 2px no-repeat; }
.steam { width: 40px; margin-left: 4px; background: #707c3c; border-bottom: 2px solid #fbee00; }
.vs2 { width: 40px; }
.we { width: 48px; margin-left: 5px; background: #0e558f; border-bottom: 2px solid #99d1f8; }
.tray { margin-left: auto; width: 393px; display: flex; align-items: center; flex: none; }
.cloud { margin-top: -2px; }
.wt { font-size: 14px; margin-left: 7px; flex: none; }
.sk { margin-left: 9px; }
.chev { margin-left: 16px; }
.tsteam { margin-left: 7px; }
.cam { margin-left: 10px; }
.net { margin-left: 8px; }
.vol { margin-left: 7px; }
.dan { font-size: 12px; margin-left: 8px; flex: none; padding-bottom: 1px; }
.clock { width: 60px; margin-left: 11px; display: flex; flex-direction: column; align-items: center; font-size: 12px; line-height: 18px; flex: none; }
.note { margin: 9px 0 0 17px; }
.peek { width: 1px; height: 40px; background: #52636f; margin-left: auto; margin-right: 4px; }
</style>
